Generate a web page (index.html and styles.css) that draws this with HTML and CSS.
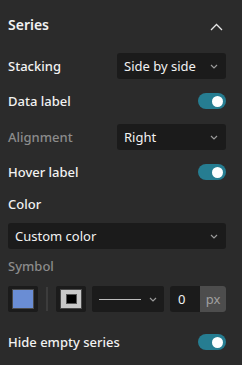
FILE: index.html
```html
<!DOCTYPE html>
<html lang="en">
<head>
    <meta charset="UTF-8">
    <meta name="viewport" content="width=device-width, initial-scale=1.0">
    <title>Series</title>
    <link rel="stylesheet" href="styles.css">
</head>
<body>
    <div class="panel">
        <div class="panel-header">
            <h2>Series</h2>
            <svg class="collapse" width="13" height="8" viewBox="0 0 13 8"><path d="M1 7 L6.5 1.5 L12 7" fill="none" stroke="#e6e6e6" stroke-width="1.3"/></svg>
        </div>

        <div class="row">
            <span class="label">Stacking</span>
            <div class="select half">
                <span>Side by side</span>
                <svg class="caret" width="8" height="5" viewBox="0 0 8 5"><path d="M1 1 L4 4 L7 1" fill="none" stroke="#9a9a9a" stroke-width="1.2"/></svg>
            </div>
        </div>

        <div class="row toggle-row">
            <span class="label">Data label</span>
            <span class="toggle"></span>
        </div>

        <div class="row">
            <span class="label muted">Alignment</span>
            <div class="select half">
                <span>Right</span>
                <svg class="caret" width="8" height="5" viewBox="0 0 8 5"><path d="M1 1 L4 4 L7 1" fill="none" stroke="#9a9a9a" stroke-width="1.2"/></svg>
            </div>
        </div>

        <div class="row toggle-row">
            <span class="label">Hover label</span>
            <span class="toggle"></span>
        </div>

        <div class="field-label">Color</div>
        <div class="select full">
            <span>Custom color</span>
            <svg class="caret" width="8" height="5" viewBox="0 0 8 5"><path d="M1 1 L4 4 L7 1" fill="none" stroke="#9a9a9a" stroke-width="1.2"/></svg>
        </div>

        <div class="field-label muted">Symbol</div>
        <div class="symbol-row">
            <div class="swatch"><span class="fill-blue"></span></div>
            <span class="divider"></span>
            <div class="swatch"><span class="fill-outline"><i></i></span></div>
            <div class="select line-select">
                <span class="line"></span>
                <svg class="caret" width="8" height="5" viewBox="0 0 8 5"><path d="M1 1 L4 4 L7 1" fill="none" stroke="#9a9a9a" stroke-width="1.2"/></svg>
            </div>
            <div class="number">
                <span class="value">0</span>
                <span class="unit">px</span>
            </div>
        </div>

        <div class="row toggle-row">
            <span class="label">Hide empty series</span>
            <span class="toggle"></span>
        </div>
    </div>
</body>
</html>
```

FILE: styles.css
```css
/* General Styling */
body {
    margin: 0;
    background: #2b2b2b;
    font-family: 'Noto Sans', 'Open Sans', sans-serif;
    color: #f2f2f2;
}

.panel {
    width: 242px;
    height: 365px;
    padding: 0 16px 0 8px;
    box-sizing: border-box;
}

.panel-header {
    display: flex;
    justify-content: space-between;
    align-items: center;
    height: 24px;
    padding-top: 12px;
    margin-bottom: 17px;
}

h2 {
    margin: 0;
    font-size: 14px;
    font-weight: 600;
}

.collapse {
    margin: 6px 3px 0 0;
}

.row {
    display: flex;
    justify-content: space-between;
    align-items: center;
    height: 26px;
    margin-bottom: 14px;
}

.toggle-row {
    height: 16px;
    margin-bottom: 15px;
}

.toggle-row + .field-label {
    margin-top: 1px;
}

.label, .field-label {
    font-size: 13px;
    font-weight: 500;
}

.muted {
    color: #8c8c8c;
}

.field-label {
    height: 18px;
    line-height: 18px;
    margin-bottom: 10px;
}

.select {
    display: flex;
    justify-content: space-between;
    align-items: center;
    box-sizing: border-box;
    height: 26px;
    padding: 0 8px 0 7px;
    background: #1b1b1b;
    border-radius: 3px;
    font-size: 13px;
}

.select.half {
    width: 109px;
}

.select.full {
    width: 218px;
    margin-bottom: 8px;
}

.caret {
    margin-top: 1px;
}

.toggle {
    position: relative;
    width: 28px;
    height: 16px;
    border-radius: 8px;
    background: #267d91;
}

.toggle::after {
    content: "";
    position: absolute;
    right: 3px;
    top: 2.5px;
    width: 11px;
    height: 11px;
    border-radius: 50%;
    background: #fff;
}

.symbol-row {
    display: flex;
    align-items: center;
    height: 26px;
    margin-top: 11px;
    margin-bottom: 22px;
}

.swatch {
    box-sizing: border-box;
    width: 30px;
    height: 26px;
    padding: 3px 4px;
    background: #1b1b1b;
    border-radius: 2px;
}

.swatch span {
    display: flex;
    justify-content: center;
    align-items: center;
    box-sizing: border-box;
    width: 100%;
    height: 100%;
    border: 1px solid #4a4a4a;
}

.fill-blue {
    background: #6a8dd4;
}

.fill-outline {
    background: #c9c9c9;
}

.fill-outline i {
    display: block;
    width: 9px;
    height: 8px;
    background: #000;
    border: 1px solid #555;
}

.divider {
    width: 2px;
    height: 24px;
    margin: 0 8px;
    background: #3c3c3c;
}

.line-select {
    width: 72px;
    margin-left: 6px;
    padding: 0 7px;
    border-radius: 2px;
}

.line {
    width: 42px;
    height: 1px;
    background: #bdbdbd;
}

.number {
    display: flex;
    margin-left: 6px;
    height: 26px;
    background: #1b1b1b;
    border-radius: 3px;
    overflow: hidden;
    font-size: 13px;
}

.value {
    width: 30px;
    padding-left: 8px;
    box-sizing: border-box;
    line-height: 26px;
}

.unit {
    width: 26px;
    text-align: center;
    line-height: 26px;
    background: #4d4d4d;
    color: #a0a0a0;
}
```
